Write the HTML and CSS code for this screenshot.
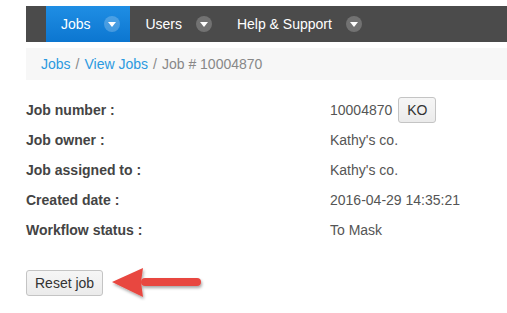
FILE: index.html
```html
<!DOCTYPE html>
<html lang="en">
<head>
  <meta charset="UTF-8">
  <title>Job # 10004870</title>
  <link rel="stylesheet" href="styles.css">
</head>
<body>
  <div class="page">
    <nav class="navbar">
      <a class="nav-item active" href="#">Jobs <span class="caret"></span></a>
      <a class="nav-item" href="#">Users <span class="caret"></span></a>
      <a class="nav-item" href="#">Help &amp; Support <span class="caret"></span></a>
    </nav>

    <div class="breadcrumb">
      <a href="#">Jobs</a>
      <span class="sep">/</span>
      <a href="#">View Jobs</a>
      <span class="sep">/</span>
      <span class="current">Job # 10004870</span>
    </div>

    <div class="details">
      <div class="label">Job number :</div>
      <div class="value">10004870 <button class="btn btn-small">KO</button></div>
      <div class="label">Job owner :</div>
      <div class="value">Kathy's co.</div>
      <div class="label">Job assigned to :</div>
      <div class="value">Kathy's co.</div>
      <div class="label">Created date :</div>
      <div class="value">2016-04-29 14:35:21</div>
      <div class="label">Workflow status :</div>
      <div class="value">To Mask</div>
    </div>

    <div class="actions">
      <button class="btn">Reset job</button>
      <svg class="arrow" width="100" height="36" viewBox="0 0 100 36">
        <defs>
          <filter id="shadow" x="-10%" y="-20%" width="130%" height="150%">
            <feDropShadow dx="1" dy="2" stdDeviation="1.5" flood-color="#000" flood-opacity="0.35"/>
          </filter>
        </defs>
        <g filter="url(#shadow)">
          <line x1="34" y1="17" x2="86" y2="17" stroke="#e8473f" stroke-width="8" stroke-linecap="round"/>
          <polygon points="1,17 32,3 30,17 32,32" fill="#e8473f"/>
        </g>
      </svg>
    </div>
  </div>
</body>
</html>
```

FILE: styles.css
```css
* {
  box-sizing: border-box;
  margin: 0;
  padding: 0;
}

body {
  background: #fff;
  font-family: 'Liberation Sans', Arial, sans-serif;
  font-size: 14px;
  color: #555;
}

.page {
  padding: 6px 0 0 26px;
}

.navbar {
  display: flex;
  height: 36px;
  background: #4b4b4b;
  padding-left: 20px;
}

.nav-item {
  display: flex;
  align-items: center;
  padding: 0 10px 0 15px;
  color: #fff;
  text-decoration: none;
  white-space: pre;
}

.nav-item.active {
  background: linear-gradient(#1f8ee4, #0c76d0);
}

.caret {
  display: inline-block;
  width: 16px;
  height: 16px;
  margin-left: 10px;
  border-radius: 50%;
  background: rgba(255, 255, 255, 0.22);
  position: relative;
}

.caret::after {
  content: '';
  position: absolute;
  left: 4px;
  top: 6px;
  border-left: 4px solid transparent;
  border-right: 4px solid transparent;
  border-top: 5px solid #fff;
}

.breadcrumb {
  margin-top: 6px;
  height: 32px;
  background: #f7f7f7;
  padding-left: 15px;
  display: flex;
  align-items: center;
  gap: 5px;
}

.breadcrumb a {
  color: #2b9ae0;
  text-decoration: none;
}

.breadcrumb .sep,
.breadcrumb .current {
  color: #888;
}

.details {
  display: grid;
  grid-template-columns: 304px auto;
  grid-auto-rows: 30px;
  margin-top: 15px;
}

.label,
.value {
  display: flex;
  align-items: center;
}

.label {
  font-weight: bold;
  color: #444;
}

.value {
  white-space: pre;
}

.btn {
  font-family: inherit;
  font-size: 14px;
  color: #333;
  background: linear-gradient(#f6f6f6, #ebebeb);
  border: 1px solid #c4c4c4;
  border-radius: 3px;
  height: 26px;
  padding: 0 8px;
}

.btn-small {
  margin-left: 2px;
}

.actions {
  display: flex;
  align-items: center;
  gap: 8px;
  margin-top: 20px;
}
```
